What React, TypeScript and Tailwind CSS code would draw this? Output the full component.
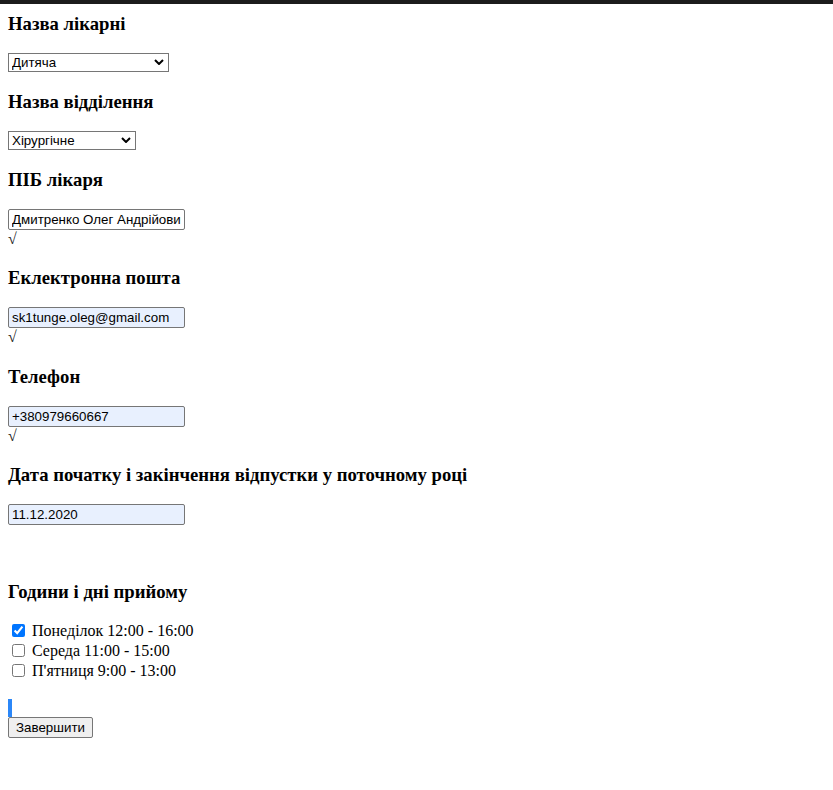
import React from "react";

const serif = { fontFamily: '"Liberation Serif", "Times New Roman", serif' };

function Heading({ children }: { children: React.ReactNode }) {
  return (
    <h3 className="text-[18.72px] leading-[21.5px] font-bold text-black mb-[18.72px]" style={serif}>
      {children}
    </h3>
  );
}

function Chevron() {
  return (
    <svg className="pointer-events-none absolute right-[5px] top-[6px]" width="10" height="6" viewBox="0 0 10 6">
      <path d="M1 1 L5 5 L9 1" fill="none" stroke="#000" strokeWidth="2" />
    </svg>
  );
}

function Select({ width, value }: { width: string; value: string }) {
  return (
    <div className={`relative h-[19px] ${width}`}>
      <select
        defaultValue={value}
        className="appearance-none block w-full h-[19px] border border-[#767676] bg-white pl-[3px] text-[13.33px] leading-[17px] text-black font-['Liberation_Sans',Arial,sans-serif]"
      >
        <option>{value}</option>
      </select>
      <Chevron />
    </div>
  );
}

function TextInput({ value, filled }: { value: string; filled?: boolean }) {
  return (
    <input
      readOnly
      defaultValue={value}
      className={`block w-[177px] h-[21px] border border-[#767676] rounded-[2px] px-[3px] text-[13.33px] text-black font-['Liberation_Sans',Arial,sans-serif] outline-none ${
        filled ? "bg-[#e8f0fe]" : "bg-white"
      }`}
    />
  );
}

function Check() {
  return (
    <div className="h-[18.4px] leading-[18.4px] text-[16px] text-[#222]" style={serif}>
      √
    </div>
  );
}

function CheckRow({ label, checked }: { label: string; checked?: boolean }) {
  return (
    <label className="flex items-center h-[20px] text-[16px] text-black" style={serif}>
      <input
        type="checkbox"
        defaultChecked={checked}
        className="ml-[4px] mr-[7px] w-[13px] h-[13px] accent-[#0075ff]"
      />
      {label}
    </label>
  );
}

export default function App() {
  return (
    <div className="min-h-[790px] bg-white">
      <div className="h-[4px] bg-[#1c1c1c]" />
      <div className="px-[8px] pt-[9px]">
        <Heading>Назва лікарні</Heading>
        <Select width="w-[161px]" value="Дитяча" />
        <div className="h-[0px]" />
        <div className="mt-[18.72px]">
          <Heading>Назва відділення</Heading>
        </div>
        <Select width="w-[128px]" value="Хірургічне" />
        <div className="mt-[18.72px]">
          <Heading>ПІБ лікаря</Heading>
        </div>
        <TextInput value="Дмитренко Олег Андрійович" />
        <Check />
        <div className="mt-[18.72px]">
          <Heading>Еклектронна пошта</Heading>
        </div>
        <TextInput value="sk1tunge.oleg@gmail.com" filled />
        <Check />
        <div className="mt-[18.72px]">
          <Heading>Телефон</Heading>
        </div>
        <TextInput value="+380979660667" filled />
        <Check />
        <div className="mt-[18.72px]">
          <Heading>Дата початку і закінчення відпустки у поточному році</Heading>
        </div>
        <TextInput value="11.12.2020" filled />
        <div className="h-[36.8px]" />
        <div className="mt-[18.72px]">
          <Heading>Години і дні прийому</Heading>
        </div>
        <div className="flex flex-col">
          <CheckRow label="Понеділок 12:00 - 16:00" checked />
          <CheckRow label="Середа 11:00 - 15:00" />
          <CheckRow label="П'ятниця 9:00 - 13:00" />
        </div>
        <div className="mt-[18px] w-[4px] h-[18px] bg-[#2b87f8]" />
        <button className="block w-[85px] h-[21px] border border-[#767676] rounded-[2px] bg-[#efefef] text-[13.33px] text-black font-['Liberation_Sans',Arial,sans-serif]">
          Завершити
        </button>
      </div>
    </div>
  );
}
